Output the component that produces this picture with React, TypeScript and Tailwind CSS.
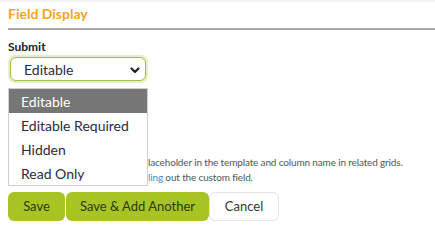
import React from "react";

export default function App() {
  const items = ["Editable", "Editable Required", "Hidden", "Read Only"];
  return (
    <div className="relative w-[435px] h-[234px] bg-white overflow-hidden font-['Lato',sans-serif] text-[#333]">
      <div className="h-[2px] bg-[#f3f3f3]" />
      <div className="px-2">
        <h2 className="pt-[3px] text-[14px] leading-[18px] font-bold text-[#f9a41c]">Field Display</h2>
        <div className="mt-[5px] h-[2px] bg-[#a9a9a9] mr-[-8px]" />
        <label className="block mt-[10px] text-[12px] leading-[14px] font-bold text-[#222]">Submit</label>
        <div className="mt-[1px] w-[140px] h-[28px] rounded-[7px] p-[2px] bg-[#e6efc5]">
          <div className="h-full rounded-[6px] border border-[#a3c03a] bg-white flex items-center justify-between pl-[13px] pr-[4px]">
            <span className="text-[14px] text-[#2f2b3a]">Editable</span>
            <svg width="12" height="12" viewBox="0 0 12 12" className="mt-[1px]">
              <path d="M2.5 4.5 L6 8 L9.5 4.5" fill="none" stroke="#222" strokeWidth="2.2" strokeLinecap="round" strokeLinejoin="round" />
            </svg>
          </div>
        </div>
        <div className="mt-[72px] text-[10px] leading-[15px] text-[#555] tracking-[-0.15px]">
          <p className="whitespace-nowrap">
            <span className="inline-block w-[140px]" />laceholder in the template and column name in related grids.
          </p>
          <p className="whitespace-nowrap">
            <span className="inline-block w-[140px]" /><span className="text-[#3d8fd1]">ling</span> out the custom field.
          </p>
        </div>
        <div className="mt-[7px] flex items-center">
          <button className="h-[29px] w-[57px] rounded-[6px] bg-[#a8c424] text-[13px] text-[#2b3a10]">Save</button>
          <button className="ml-[1px] h-[29px] w-[143px] rounded-[6px] bg-[#a8c424] text-[13px] text-[#2b3a10]">Save &amp; Add Another</button>
          <button className="h-[29px] w-[70px] rounded-[6px] border border-[#e2e2e2] bg-white text-[13px] text-[#333]">Cancel</button>
        </div>
      </div>
      <div className="absolute left-[8px] top-[88px] w-[140px] border border-[#cfcfcf] bg-white">
        {items.map((it, i) => (
          <div
            key={it}
            className={
              i === 0
                ? "h-[24px] pl-[12px] flex items-center text-[14px] bg-[#767676] text-white"
                : "h-[24px] pl-[12px] flex items-center text-[14px] text-[#2f2b3a]"
            }
          >
            {it}
          </div>
        ))}
      </div>
    </div>
  );
}
